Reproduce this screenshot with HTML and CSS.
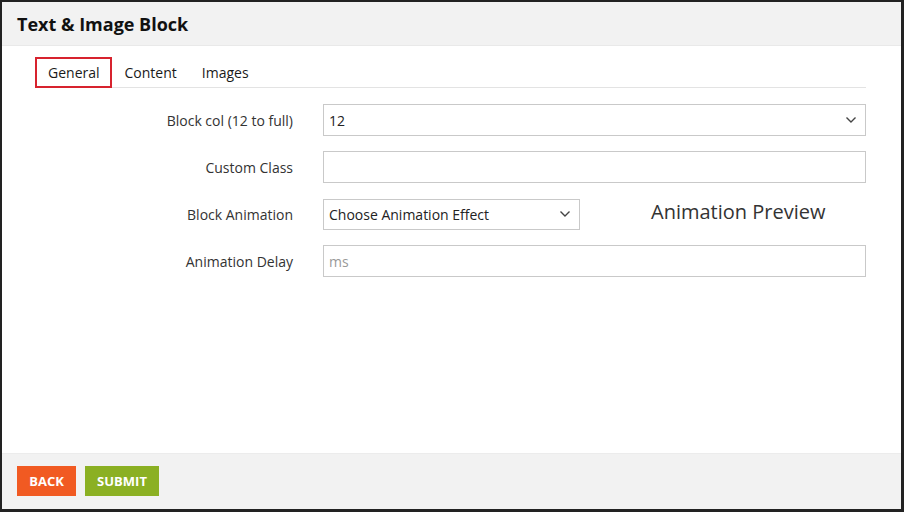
FILE: index.html
```html
<!DOCTYPE html>
<html>
<head>
<meta charset="utf-8">
<link rel="stylesheet" href="styles.css">
</head>
<body>
<div class="frame">
  <div class="header"><h1 class="title">Text &amp; Image Block</h1></div>
  <div class="main">
    <div class="tabs">
      <span class="tab active">General</span>
      <span class="tab">Content</span>
      <span class="tab">Images</span>
    </div>
    <div class="form">
      <div class="row">
        <label class="label">Block col (12 to full)</label>
        <div class="field select full">
          <span class="value">12</span>
          <svg class="chev" width="12" height="8" viewBox="0 0 12 8"><path d="M1.5 1.5 L6 6 L10.5 1.5" fill="none" stroke="#444" stroke-width="1.4"/></svg>
        </div>
      </div>
      <div class="row">
        <label class="label">Custom Class</label>
        <div class="field full"></div>
      </div>
      <div class="row">
        <label class="label">Block Animation</label>
        <div class="field select half">
          <span class="value">Choose Animation Effect</span>
          <svg class="chev" width="12" height="8" viewBox="0 0 12 8"><path d="M1.5 1.5 L6 6 L10.5 1.5" fill="none" stroke="#444" stroke-width="1.4"/></svg>
        </div>
        <div class="preview">Animation Preview</div>
      </div>
      <div class="row">
        <label class="label">Animation Delay</label>
        <div class="field full"><span class="placeholder">ms</span></div>
      </div>
    </div>
  </div>
  <div class="footer">
    <button class="btn back">BACK</button>
    <button class="btn submit">SUBMIT</button>
  </div>
</div>
</body>
</html>
```

FILE: styles.css
```css
html, body {
  margin: 0;
  padding: 0;
  background: #222;
}
body {
  font-family: "Open Sans", "Noto Sans", sans-serif;
  color: #333;
}
.frame {
  box-sizing: border-box;
  width: 904px;
  height: 512px;
  border-style: solid;
  border-color: #222;
  border-width: 2px 3px 3px 2px;
  background: #fff;
  display: flex;
  flex-direction: column;
}
.header {
  height: 43px;
  background: #f2f2f2;
  border-bottom: 1px solid #e9e9e9;
  display: flex;
  align-items: center;
  padding-left: 15px;
}
.title {
  margin: 0;
  margin-top: 1px;
  font-size: 18px;
  font-weight: 700;
  color: #111;
}
.main {
  flex: 1;
  padding: 11px 35px 0 33px;
}
.tabs {
  display: flex;
  border-bottom: 1px solid #e3e3e3;
  height: 30px;
}
.tab {
  box-sizing: border-box;
  height: 31px;
  padding: 0 10px 0 11px;
  border: 2px solid transparent;
  font-size: 14px;
  color: #1a1a1a;
  display: flex;
  align-items: center;
}
.tab.active {
  border-color: #d7232e;
}
.form {
  padding-top: 16px;
  display: flex;
  flex-direction: column;
  gap: 15px;
}
.row {
  display: flex;
  align-items: center;
  height: 32px;
}
.label {
  width: 258px;
  text-align: right;
  font-size: 14px;
  color: #333;
  margin-right: 30px;
  flex: none;
}
.field {
  box-sizing: border-box;
  height: 32px;
  border: 1px solid #c9c9c9;
  background: #fff;
  display: flex;
  align-items: center;
  padding: 0 6px 0 5px;
  font-size: 14px;
  color: #222;
}
.full {
  flex: 1;
}
.half {
  width: 257px;
  height: 31px;
}
.select {
  justify-content: space-between;
  padding-right: 8px;
}
.chev {
  display: block;
}
.placeholder {
  color: #999;
}
.preview {
  margin-left: 71px;
  font-size: 20px;
  color: #333;
  margin-top: -5px;
}
.footer {
  box-sizing: border-box;
  height: 56px;
  background: #f2f2f2;
  border-top: 1px solid #ececec;
  display: flex;
  align-items: flex-start;
  padding: 12px 0 0 15px;
  gap: 9px;
}
.btn {
  border: none;
  height: 30px;
  font-family: "Open Sans", "Noto Sans", sans-serif;
  font-size: 13px;
  font-weight: 700;
  color: #fff;
  padding: 0;
  cursor: pointer;
}
.back {
  width: 59px;
  background: #f15a22;
}
.submit {
  width: 74px;
  background: #8bb023;
}
```
